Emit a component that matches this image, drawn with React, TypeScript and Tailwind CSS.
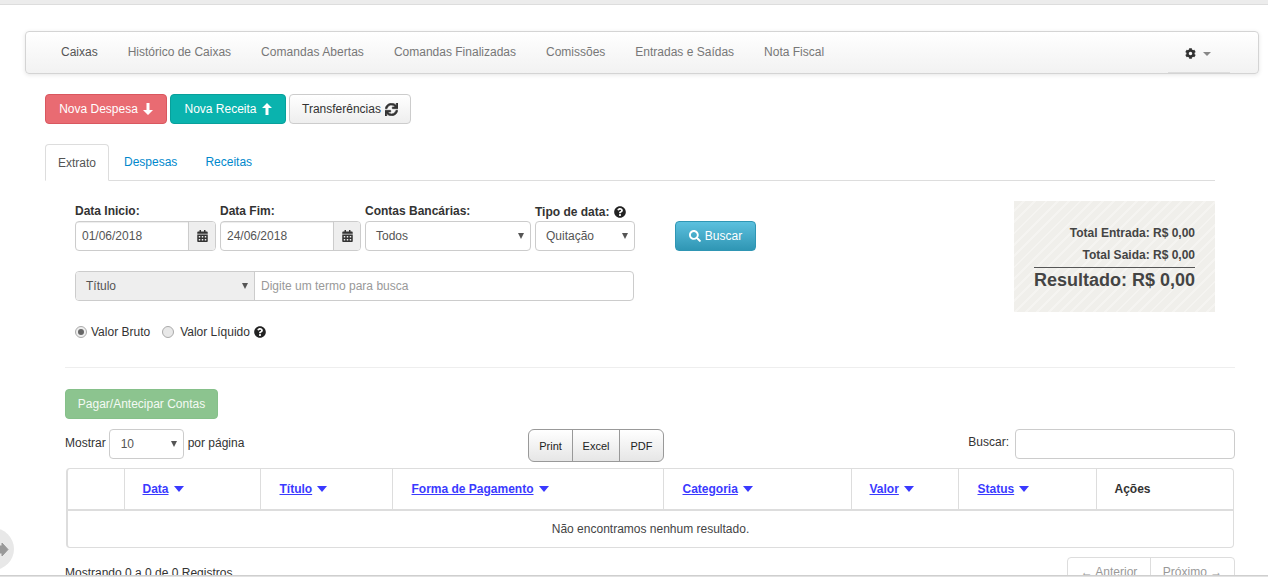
import { FaCalendarAlt, FaCog, FaQuestionCircle, FaSearch, FaSync } from 'react-icons/fa';

const navItems = [
  { label: 'Histórico de Caixas', cls: 'px-[15px]' },
  { label: 'Comandas Abertas', cls: 'pl-[15px] pr-[15px] tracking-[0.05px]' },
  { label: 'Comandas Finalizadas', cls: 'px-[15px]' },
  { label: 'Comissões', cls: 'px-[15px]' },
  { label: 'Entradas e Saídas', cls: 'px-[15px]' },
  { label: 'Nota Fiscal', cls: 'px-[15px]' },
];

const columns = [
  { label: '', width: 'w-[56px]', pl: '' },
  { label: 'Data', width: 'w-[136px]', pl: 'pl-[18px]' },
  { label: 'Título', width: 'w-[132px]', pl: 'pl-[19px]' },
  { label: 'Forma de Pagamento', width: 'w-[271px]', pl: 'pl-[19px]' },
  { label: 'Categoria', width: 'w-[188px]', pl: 'pl-[19px]' },
  { label: 'Valor', width: 'w-[107px]', pl: 'pl-[18px]' },
  { label: 'Status', width: 'w-[138px]', pl: 'pl-[19px]' },
];

function SelectArrow() {
  return <span className="w-0 h-0 border-x-[3.5px] border-x-transparent border-t-[6px] border-t-[#555]" />;
}

// same shape as the old glyphicon arrows: thick shaft, wide head
function ArrowDown() {
  return (
    <svg viewBox="0 0 10 12" className="w-[10px] h-[12px]" fill="currentColor">
      <path d="M3.5 0h3v7H10l-5 5-5-5h3.5z" />
    </svg>
  );
}

function ArrowUp() {
  return (
    <svg viewBox="0 0 10 12" className="w-[10px] h-[12px]" fill="currentColor">
      <path d="M3.5 12h3V5H10L5 0 0 5h3.5z" />
    </svg>
  );
}

function DateField({ label, value }: { label: string; value: string }) {
  return (
    <div className="w-[141px]">
      <label className="block h-[20px] font-bold text-[#333] leading-[21px]">{label}</label>
      <div className="flex h-[30px] rounded border border-[#ccc] overflow-hidden">
        <div className="flex-1 pl-[6px] leading-[28px] text-[#555] shadow-[inset_0_1px_1px_rgba(0,0,0,0.075)]">{value}</div>
        <div className="w-[27px] flex items-center justify-center bg-[#eee] border-l border-[#ccc] text-[#333]">
          <FaCalendarAlt className="w-[11px] h-[12px]" />
        </div>
      </div>
    </div>
  );
}

function SelectField({ value, className }: { value: string; className: string }) {
  return (
    <div className={`flex items-center justify-between h-[30px] rounded border border-[#ccc] pl-[10px] pr-[6px] text-[#555] ${className}`}>
      <span>{value}</span>
      <SelectArrow />
    </div>
  );
}

export default function App() {
  return (
    <div className="relative w-[1268px] h-[577px] overflow-hidden bg-white text-xs text-[#333] font-['Liberation_Sans',Arial,sans-serif]">
      <div className="h-[5px] bg-[#ececec] border-b border-[#ddd]" />

      {/* Top nav */}
      <nav className="ml-[25px] mt-[26px] w-[1234px] h-[43px] flex rounded border border-[#d4d4d4] bg-gradient-to-b from-white to-[#f2f2f2] shadow-[0_1px_4px_rgba(0,0,0,0.1)]">
        <div className="flex pl-[20px] h-[39px] items-center">
          <a className="px-[15px] text-[#555]">Caixas</a>
          {navItems.map((item) => (
            <a key={item.label} className={`${item.cls} text-[#777]`}>{item.label}</a>
          ))}
        </div>
        <div className="ml-auto mr-[28px] w-[62px] h-[41px] border-b border-[#ddd] flex items-center justify-center gap-[7px] pt-[3px] pr-[2px] text-[#333]">
          <FaCog className="w-[11px] h-[11px]" />
          <span className="w-0 h-0 border-x-[4px] border-x-transparent border-t-[4px] border-t-[#888]" />
        </div>
      </nav>

      {/* Action buttons */}
      <div className="ml-[45px] mt-[20px] flex gap-[3px] h-[30px]">
        <button className="w-[122px] flex items-center justify-center gap-[5px] rounded bg-[#e96b72] border border-[#d9575f] text-white">
          Nova Despesa <ArrowDown />
        </button>
        <button className="w-[116px] flex items-center justify-center gap-[5px] rounded bg-[#0ab3ae] border border-[#08a09b] text-white">
          Nova Receita <ArrowUp />
        </button>
        <button className="w-[122px] flex items-center justify-center gap-[4px] rounded border border-[#ccc] bg-gradient-to-b from-white to-[#eee] text-[#333]">
          Transferências <FaSync className="w-[13px] h-[13px]" stroke="currentColor" strokeWidth={24} />
        </button>
      </div>

      {/* Tabs */}
      <div className="ml-[45px] mt-[20px] w-[1170px] h-[37px] flex border-b border-[#ddd]">
        <div className="w-[64px] h-[37px] rounded-t border border-[#ddd] border-b-white bg-white text-[#555] text-center leading-[36px]">Extrato</div>
        <a className="pl-[15px] pr-[14px] leading-[37px] text-[#0088cc]">Despesas</a>
        <a className="px-[14px] leading-[37px] text-[#0088cc]">Receitas</a>
      </div>

      {/* Filters + summary */}
      <div className="ml-[75px] mt-[20px] w-[1140px] flex justify-between">
        <div>
          <div className="flex gap-[4px] items-end">
            <DateField label="Data Inicio:" value="01/06/2018" />
            <DateField label="Data Fim:" value="24/06/2018" />
            <div className="w-[166px]">
              <label className="block h-[20px] font-bold leading-[21px]">Contas Bancárias:</label>
              <SelectField value="Todos" className="w-full" />
            </div>
            <div className="w-[100px]">
              <label className="flex items-center gap-[5px] h-[20px] pt-[1px] font-bold whitespace-nowrap">
                Tipo de data: <FaQuestionCircle className="w-[12px] h-[12px] text-[#222]" />
              </label>
              <SelectField value="Quitação" className="w-full" />
            </div>
            <button className="ml-[36px] w-[81px] h-[30px] flex items-center justify-center gap-[4px] rounded border border-[#2f96b4] bg-gradient-to-b from-[#5bc0de] to-[#2f96b4] text-white">
              <FaSearch className="w-[12px] h-[12px]" /> Buscar
            </button>
          </div>

          <div className="mt-[20px] w-[559px] h-[30px] flex rounded border border-[#ccc] overflow-hidden">
            <div className="w-[179px] flex items-center justify-between pl-[10px] pr-[6px] bg-[#eee] border-r border-[#ccc] text-[#555]">
              <span>Título</span>
              <SelectArrow />
            </div>
            <div className="flex-1 pl-[6px] leading-[28px] text-[#999]">Digite um termo para busca</div>
          </div>

          <div className="mt-[23px] flex items-center h-[16px] text-[#333]">
            <span className="w-[12px] h-[12px] rounded-full border border-[#aaa] bg-[#eee] flex items-center justify-center">
              <span className="w-[6px] h-[6px] rounded-full bg-[#666]" />
            </span>
            <span className="ml-[4px]">Valor Bruto</span>
            <span className="ml-[12px] w-[12px] h-[12px] rounded-full border border-[#aaa] bg-[#e8e8e8]" />
            <span className="ml-[6px]">Valor Líquido</span>
            <FaQuestionCircle className="ml-[4px] w-[12px] h-[12px] text-[#222]" />
          </div>
        </div>

        <div className="w-[201px] h-[111px] pt-[24px] px-[20px] text-right bg-[repeating-linear-gradient(135deg,#f0efeb_0px,#f0efeb_6px,#f5f4f1_6px,#f5f4f1_8px)]">
          <div className="h-[22px] leading-[16px] font-bold text-[#444]">Total Entrada: R$ 0,00</div>
          <div className="h-[20px] leading-[16px] font-bold text-[#444]">Total Saida: R$ 0,00</div>
          <div className="border-t border-[#555] pt-[1px] text-lg leading-[22px] font-bold text-[#444] whitespace-nowrap">Resultado: R$ 0,00</div>
        </div>
      </div>

      <hr className="ml-[65px] mt-[27px] w-[1170px] border-[#eee]" />

      {/* Table section */}
      <div className="ml-[65px] mt-[21px] w-[1170px]">
        <button className="block w-[153px] h-[30px] rounded border border-[#86c08a] bg-[#8cc48f] text-[#f4faf4]">Pagar/Antecipar Contas</button>

        <div className="mt-[10px] h-[39px] flex items-start justify-between">
          <div className="flex items-center gap-[3px] h-[30px] w-[180px] text-[#333]">
            <span className="mt-[-3px]">Mostrar</span>
            <SelectField value="10" className="w-[75px] pl-[11px]" />
            <span className="ml-[1px] mt-[-3px] whitespace-nowrap">por página</span>
          </div>
          <div className="ml-[283px] flex h-[33px] rounded-md border border-[#999] bg-gradient-to-b from-white to-[#e6e6e6] text-[#222] text-[11px] overflow-hidden">
            <span className="w-[43px] text-center leading-[32px]">Print</span>
            <span className="w-[48px] text-center leading-[32px] border-x border-[#999]">Excel</span>
            <span className="w-[43px] text-center leading-[32px]">PDF</span>
          </div>
          <div className="ml-auto flex items-center gap-[6px] h-[30px]">
            <span className="mt-[-5px]">Buscar:</span>
            <div className="w-[220px] h-[30px] rounded border border-[#ccc]" />
          </div>
        </div>

        <div className="ml-[1px] w-[1168px] h-[80px] rounded border border-[#ddd] border-l-2 overflow-hidden">
          <table className="w-full table-fixed border-collapse">
            <thead>
              <tr className="h-[41px] border-b-2 border-[#ddd]">
                {columns.map((col, i) => (
                  <th key={i} className={`${col.width} ${col.pl} border-r border-[#ddd] text-left font-bold`}>
                    {col.label && (
                      <span className="inline-flex items-center gap-[5px]">
                        <a className="underline text-[#3a3aff]">{col.label}</a>
                        <span className="w-0 h-0 border-x-[5px] border-x-transparent border-t-[6px] border-t-[#3a3aff]" />
                      </span>
                    )}
                  </th>
                ))}
                <th className="pl-[18px] text-left font-bold text-[#333]">Ações</th>
              </tr>
            </thead>
            <tbody>
              <tr className="h-[37px]">
                <td colSpan={8} className="text-center text-[#444]">Não encontramos nenhum resultado.</td>
              </tr>
            </tbody>
          </table>
        </div>

        <div className="mt-[9px] flex justify-between">
          <span className="mt-[8px]">Mostrando 0 a 0 de 0 Registros</span>
          <div className="w-[168px] h-[30px] flex rounded border border-[#ddd] text-[#999]">
            <span className="w-[83px] text-center leading-[28px] border-r border-[#ddd] whitespace-nowrap">← Anterior</span>
            <span className="flex-1 text-center leading-[28px] whitespace-nowrap">Próximo →</span>
          </div>
        </div>
      </div>

      {/* Floating handle on the left edge */}
      <div className="absolute left-[-28px] top-[528px] w-[42px] h-[42px] rounded-full bg-[#e8e8e8] flex items-center justify-end pr-[5px] text-[#999]">
        <svg viewBox="0 0 9 15" className="w-[9px] h-[15px]" fill="currentColor" stroke="currentColor" strokeLinejoin="round">
          <path d="M0 4h2V1l6 6.5-6 6.5v-3H0z" />
        </svg>
      </div>

      {/* Browser window edge at the bottom */}
      <div className="absolute left-0 bottom-0 w-full h-[2px] bg-[#e2e2e2] border-t border-[#cfcfcf]" />
    </div>
  );
}
